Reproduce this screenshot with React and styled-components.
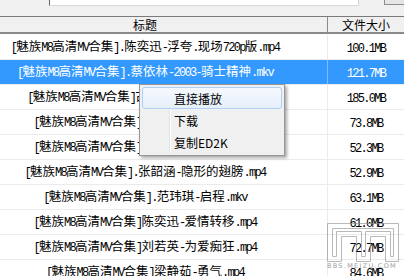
import React from 'react';
import styled, { createGlobalStyle } from 'styled-components';

const Global = createGlobalStyle`
  html, body { margin: 0; padding: 0; background: #fff; overflow: hidden; }
  body { width: 404px; height: 276px; font-family: "Noto Sans CJK SC", "Noto Sans", sans-serif; }
`;

const Window = styled.div`
  position: relative;
  width: 404px;
  height: 276px;
  overflow: hidden;
  background: #fff;
  display: flex;
  flex-direction: column;
`;

const TopBar = styled.div`
  height: 16px;
  flex-shrink: 0;
  background: #f0f0f0;
  display: flex;
  align-items: flex-start;
`;

const TopInput = styled.div`
  margin-left: 49px;
  width: 318px;
  height: 6px;
  box-sizing: border-box;
  background: #fff;
  border-left: 1px solid #646464;
  border-right: 1px solid #d4d4d4;
  border-bottom: 1px solid #dadada;
`;

const TopButton = styled.div`
  margin-left: 25px;
  width: 20px;
  height: 5px;
  box-sizing: border-box;
  background: #e6e6e6;
  border-left: 1px solid #8c8c8c;
  border-bottom: 1px solid #8c8c8c;
`;

const Header = styled.div`
  flex-shrink: 0;
  display: grid;
  grid-template-columns: 328px 1fr;
  height: 18px;
  box-sizing: border-box;
  background: #f0f0f0;
  border-top: 1px solid #7a7a7a;
  border-bottom: 2px solid #8a8a8a;
  font-size: 12px;
  color: #000;
`;

const HeaderCell = styled.div`
  display: flex;
  align-items: center;
  justify-content: center;
  line-height: 1;
  padding-right: ${p => p.$shift || 0}px;
  border-right: ${p => (p.$divider ? '1px solid #8a8a8a' : 'none')};
`;

const Body = styled.div`
  display: flex;
  flex-direction: column;
  padding-top: 1px;
`;

const Row = styled.div`
  display: grid;
  grid-template-columns: 328px 1fr;
  height: 25px;
  flex-shrink: 0;
  box-sizing: border-box;
  border-bottom: 1px solid #ebebeb;
  background: ${p => (p.$selected ? '#3399ff' : '#fff')};
  color: ${p => (p.$selected ? '#fff' : '#000')};
`;

const TitleCell = styled.div`
  display: flex;
  align-items: center;
  justify-content: center;
  padding-right: 37px;
  white-space: nowrap;
  overflow: hidden;
  font-size: 12.5px;
  border-right: 1px solid ${p => (p.$selected ? '#7cbcff' : '#ebebeb')};
`;

const SizeCell = styled.div`
  display: flex;
  align-items: center;
  justify-content: center;
  white-space: nowrap;
`;

const Line = styled.span`
  display: block;
  line-height: 16px;
  white-space: nowrap;
`;

const Latin = styled.span`
  font-family: "Liberation Mono", monospace;
  font-size: 12px;
  letter-spacing: -1.7px;
`;

const Menu = styled.div`
  position: absolute;
  left: 139px;
  top: 84px;
  width: 146px;
  box-sizing: border-box;
  padding: 2px;
  background: #f0f0f0;
  border: 1px solid #979797;
  box-shadow: 2px 2px 3px rgba(0, 0, 0, 0.35);
  display: flex;
  flex-direction: column;
  font-size: 12px;
  color: #000;
  &::before {
    content: '';
    position: absolute;
    top: 2px;
    bottom: 2px;
    left: 29px;
    width: 1px;
    background: #e2e3e3;
    box-shadow: 1px 0 0 #fff;
  }
`;

const MenuItem = styled.div`
  position: relative;
  z-index: 1;
  height: 22px;
  box-sizing: border-box;
  display: flex;
  align-items: center;
  padding-left: 31px;
  border: 1px solid ${p => (p.$active ? '#aecff7' : 'transparent')};
  border-radius: 3px;
  background: ${p => (p.$active ? 'linear-gradient(#f5f9fe, #e6effb)' : 'transparent')};
`;

const Watermark = styled.div`
  position: absolute;
  left: 320px;
  top: 221px;
  width: 84px;
  height: 52px;
  display: flex;
  flex-direction: column;
  align-items: center;
  pointer-events: none;
`;

const WatermarkText = styled.div`
  margin-top: -1px;
  font-family: "DejaVu Sans", sans-serif;
  font-size: 6.5px;
  letter-spacing: 1.3px;
  color: #a0a0a0;
  white-space: nowrap;
`;

function Mixed({ text }) {
  const parts = text.split(/([\x20-\x7e]+)/).filter(Boolean);
  return (
    <Line>
      {parts.map((p, i) =>
        /^[\x20-\x7e]+$/.test(p) ? <Latin key={i}>{p}</Latin> : <React.Fragment key={i}>{p}</React.Fragment>
      )}
    </Line>
  );
}

const rows = [
  ['[魅族M8高清MV合集].陈奕迅-浮夸.现场720p版.mp4', '100.1MB'],
  ['[魅族M8高清MV合集].蔡依林-2003-骑士精神.mkv', '121.7MB', true],
  ['[魅族M8高清MV合集]古巨基-情歌王串烧.mp4', '185.0MB'],
  ['[魅族M8高清MV合集]王力宏-大城小爱.mp4', '73.8MB'],
  ['[魅族M8高清MV合集]周杰伦-千里之外.mp4', '52.3MB'],
  ['[魅族M8高清MV合集].张韶涵-隐形的翅膀.mp4', '52.9MB'],
  ['[魅族M8高清MV合集].范玮琪-启程.mkv', '63.1MB'],
  ['[魅族M8高清MV合集]陈奕迅-爱情转移.mp4', '61.0MB'],
  ['[魅族M8高清MV合集]刘若英-为爱痴狂.mp4', '72.7MB'],
  ['[魅族M8高清MV合集]梁静茹-勇气.mp4', '84.6MB'],
];

function MeizuLogo() {
  return (
    <svg width="78" height="42" viewBox="0 0 78 42" fill="none" stroke="#8c8c8c" strokeWidth="1" opacity="0.6">
      <path d="M4.5 2.5 H75.5 V40.5 H62.5 V15.5 H47.5 V40.5 H33.5 V15.5 H18.5 V40.5 H4.5 Z" />
      <path d="M9.5 7.5 H70.5 V35.5 H67.5 V10.5 H42.5 V35.5 H38.5 V10.5 H13.5 V35.5 H9.5 Z" />
    </svg>
  );
}

export default function App() {
  return (
    <>
      <Global />
      <Window>
        <TopBar>
          <TopInput />
          <TopButton />
        </TopBar>
        <Header>
          <HeaderCell $divider $shift={37}>标题</HeaderCell>
          <HeaderCell>文件大小</HeaderCell>
        </Header>
        <Body>
          {rows.map(([title, size, sel], i) => (
            <Row key={i} $selected={!!sel}>
              <TitleCell $selected={!!sel}>
                <Mixed text={title} />
              </TitleCell>
              <SizeCell>
                <Mixed text={size} />
              </SizeCell>
            </Row>
          ))}
        </Body>
        <Menu>
          <MenuItem $active>直接播放</MenuItem>
          <MenuItem>下载</MenuItem>
          <MenuItem>复制ED2K</MenuItem>
        </Menu>
        <Watermark>
          <MeizuLogo />
          <WatermarkText>BBS.MEIZU.COM</WatermarkText>
        </Watermark>
      </Window>
    </>
  );
}
